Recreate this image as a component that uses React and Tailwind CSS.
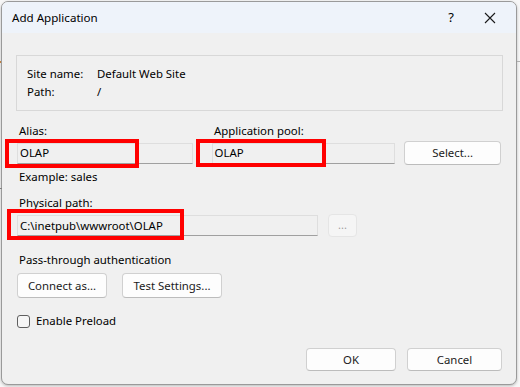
import React from "react";

const font = { fontFamily: '"Segoe UI", "Noto Sans", sans-serif' };

function Btn({ children, className = "" }) {
  return (
    <div
      className={
        "flex items-center justify-center rounded-[4px] border border-[#d0d0d0] border-b-[#bcbcbc] bg-[#fdfdfd] text-[11.4px] text-[#1b1b1b] " +
        className
      }
    >
      {children}
    </div>
  );
}

function Field({ value, className = "" }) {
  return (
    <div
      className={
        "flex h-[21px] items-center border border-[#dedede] border-b-[#a0a0a0] bg-[#f0f0f0] pl-[2px] text-[11.4px] text-[#000] " +
        className
      }
    >
      {value}
    </div>
  );
}

function RedBox({ className }) {
  return <div className={"pointer-events-none absolute border-[4px] border-[#ff0000] " + className} />;
}

export default function App() {
  return (
    <div className="relative h-[387px] w-[520px] overflow-hidden bg-[#f7f7f7]" style={font}>
      <div className="absolute left-0 top-[61px] h-[2px] w-[1px] bg-[#c08040]" />
      <div className="absolute right-0 top-[61px] h-[1px] w-[3px] bg-[#b0b0b0]" />
      <div className="absolute left-0 top-[188px] h-[1px] w-[2px] bg-[#808080]" />
      <div className="ml-[1px] mt-[1px] flex h-[384px] w-[516px] flex-col overflow-hidden rounded-[7px] border border-[#9a9a9a] bg-[#f0f0f0] shadow-[0_1px_3px_rgba(0,0,0,0.25)]">
        <div className="flex h-[31px] shrink-0 items-center bg-[#eef3fa] pl-[10px] pr-[20px] text-[11.6px] text-[#000]">
          <span className="pt-[1px]">Add Application</span>
          <span className="ml-auto mr-[30px] text-[13px]">?</span>
          <svg width="12" height="12" viewBox="0 0 12 12" className="mt-[1px]">
            <path d="M1 1 L11 11 M11 1 L1 11" stroke="#1a1a1a" strokeWidth="1.1" />
          </svg>
        </div>
        <div className="relative flex flex-1 flex-col px-[15px] text-[11.4px] text-[#000]">
          <div className="ml-[-1px] mt-[22px] flex h-[56px] w-[487px] flex-col justify-center border border-[#d8d8d8] pl-[10px]">
            <div className="flex h-[18px] items-center">
              <span className="w-[70px]">Site name:</span>
              <span>Default Web Site</span>
            </div>
            <div className="flex h-[18px] items-center">
              <span className="w-[70px]">Path:</span>
              <span>/</span>
            </div>
          </div>

          <div className="mt-[12px] flex h-[16px] items-center">
            <span className="w-[195px] pl-[2px]">Alias:</span>
            <span className="pl-[2px]">Application pool:</span>
          </div>
          <div className="mt-[2px] flex h-[24px] items-center">
            <Field value="OLAP" className="w-[176px]" />
            <Field value="OLAP" className="ml-[19px] w-[184px]" />
            <Btn className="ml-[9px] h-[24px] w-[97px] border-[#0067c0] border-b-[#0067c0]">Select...</Btn>
          </div>
          <div className="mt-[4px] flex h-[16px] items-center pl-[2px]">Example: sales</div>
          <div className="mt-[10px] flex h-[16px] items-center pl-[2px]">Physical path:</div>
          <div className="mt-[3px] flex h-[23px] items-center">
            <Field value={"C:\\inetpub\\wwwroot\\OLAP"} className="w-[301px]" />
            <div className="ml-[10px] flex h-[23px] w-[29px] items-center justify-center rounded-[4px] border border-[#e5e5e5] bg-[#f5f5f5] text-[11px] text-[#a0a0a0]">
              ...
            </div>
          </div>
          <div className="mt-[15px] flex h-[16px] items-center pl-[2px]">Pass-through authentication</div>
          <div className="mt-[5px] flex h-[25px] items-center">
            <Btn className="h-[25px] w-[90px]">Connect as...</Btn>
            <Btn className="ml-[15px] h-[25px] w-[100px]">Test Settings...</Btn>
          </div>
          <div className="mt-[15px] flex h-[16px] items-center">
            <div className="h-[13px] w-[13px] rounded-[3px] border border-[#5f5f5f] bg-[#f6f6f6]" />
            <span className="ml-[6px]">Enable Preload</span>
          </div>
          <div className="mt-[19px] flex h-[23px] items-center justify-end">
            <Btn className="h-[23px] w-[90px]">OK</Btn>
            <Btn className="ml-[11px] mr-[-1px] h-[23px] w-[95px]">Cancel</Btn>
          </div>

          <RedBox className="left-[3px] top-[106px] h-[29px] w-[134px]" />
          <RedBox className="left-[194px] top-[106px] h-[28px] w-[130px]" />
          <RedBox className="left-[5px] top-[176px] h-[31px] w-[177px]" />
        </div>
      </div>
    </div>
  );
}
